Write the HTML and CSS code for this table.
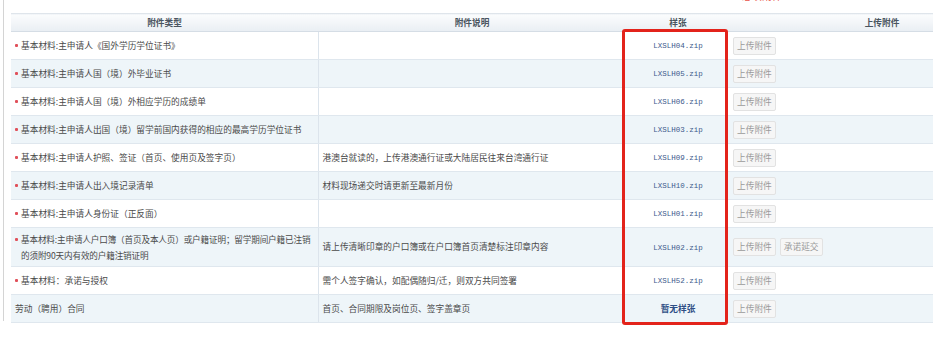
FILE: index.html
```html
<!DOCTYPE html>
<html lang="zh">
<head>
<meta charset="utf-8">
<link rel="stylesheet" href="styles.css">
</head>
<body>
<div class="page">
  <div class="topnote"><span class="req">* 必填附件</span></div>
  <table class="att">
    <colgroup>
      <col class="c1"><col class="c2"><col class="c3"><col class="c4">
    </colgroup>
    <thead>
      <tr><th>附件类型</th><th>附件说明</th><th>样张</th><th>上传附件</th></tr>
    </thead>
    <tbody>
      <tr><td class="type mark"><span class="dot"></span>基本材料:主申请人《国外学历学位证书》</td><td class="desc"></td><td class="sample"><a>LXSLH04.zip</a></td><td class="ops"><span class="btn">上传附件</span></td></tr>
      <tr class="alt"><td class="type mark"><span class="dot"></span>基本材料:主申请人国（境）外毕业证书</td><td class="desc"></td><td class="sample"><a>LXSLH05.zip</a></td><td class="ops"><span class="btn">上传附件</span></td></tr>
      <tr><td class="type mark"><span class="dot"></span>基本材料:主申请人国（境）外相应学历的成绩单</td><td class="desc"></td><td class="sample"><a>LXSLH06.zip</a></td><td class="ops"><span class="btn">上传附件</span></td></tr>
      <tr class="alt"><td class="type mark"><span class="dot"></span>基本材料:主申请人出国（境）留学前国内获得的相应的最高学历学位证书</td><td class="desc"></td><td class="sample"><a>LXSLH03.zip</a></td><td class="ops"><span class="btn">上传附件</span></td></tr>
      <tr><td class="type mark"><span class="dot"></span>基本材料:主申请人护照、签证（首页、使用页及签字页）</td><td class="desc">港澳台就读的，上传港澳通行证或大陆居民往来台湾通行证</td><td class="sample"><a>LXSLH09.zip</a></td><td class="ops"><span class="btn">上传附件</span></td></tr>
      <tr class="alt"><td class="type mark"><span class="dot"></span>基本材料:主申请人出入境记录清单</td><td class="desc">材料现场递交时请更新至最新月份</td><td class="sample"><a>LXSLH10.zip</a></td><td class="ops"><span class="btn">上传附件</span></td></tr>
      <tr><td class="type mark"><span class="dot"></span>基本材料:主申请人身份证（正反面）</td><td class="desc"></td><td class="sample"><a>LXSLH01.zip</a></td><td class="ops"><span class="btn">上传附件</span></td></tr>
      <tr class="alt tall"><td class="type mark"><span class="dot"></span>基本材料:主申请人户口簿（首页及本人页）或户籍证明；留学期间户籍已注销的须附90天内有效的户籍注销证明</td><td class="desc">请上传清晰印章的户口簿或在户口簿首页清楚标注印章内容</td><td class="sample"><a>LXSLH02.zip</a></td><td class="ops"><span class="btn">上传附件</span><span class="btn">承诺延交</span></td></tr>
      <tr><td class="type mark"><span class="dot"></span>基本材料：承诺与授权</td><td class="desc">需个人签字确认，如配偶随归/迁，则双方共同签署</td><td class="sample"><a>LXSLH52.zip</a></td><td class="ops"><span class="btn">上传附件</span></td></tr>
      <tr class="alt"><td class="type">劳动（聘用）合同</td><td class="desc">首页、合同期限及岗位页、签字盖章页</td><td class="sample"><a class="none">暂无样张</a></td><td class="ops"><span class="btn">上传附件</span></td></tr>
    </tbody>
  </table>
  <div class="highlight"></div>
</div>
</body>
</html>
```

FILE: styles.css
```css
html, body {
  margin: 0;
  padding: 0;
  background: #fff;
  overflow: hidden;
}
body {
  width: 933px;
  height: 341px;
  font-family: "Noto Sans CJK SC", "Noto Sans", sans-serif;
  font-size: 8.7px;
  color: #444;
}
.page {
  position: relative;
  margin-left: 3px;
  border-left: 1px solid #d4d4d4;
  padding-left: 7px;
  width: 1040px;
  height: 321px;
}
.topnote {
  height: 13px;
  overflow: hidden;
  padding-left: 724px;
}
.req {
  display: block;
  margin-top: -10px;
  color: #e8544a;
  font-size: 10px;
  line-height: 12px;
}
.att {
  border-collapse: collapse;
  table-layout: fixed;
  width: 1023px;
}
.c1 { width: 307px; }
.c2 { width: 308px; }
.c3 { width: 104px; }
.c4 { width: 304px; }
.att th {
  height: 17px;
  padding: 0;
  font-weight: bold;
  color: #4a5560;
  font-size: 8.7px;
  text-align: center;
  background: linear-gradient(#fbfcfd, #e9eef3);
  border-top: 1px solid #dfe5eb;
  border-bottom: 1px solid #d5dde5;
}
.att td {
  height: 27px;
  padding: 0 0 0 4px;
  border-bottom: 1px solid #dfe7ee;
  vertical-align: middle;
  line-height: 16px;
  color: #4a4a4a;
}
.att tr.alt td { background: #eef5f9; }
.att tr.tall td { height: 38px; }
.att tr.tall td.type { font-size: 8.6px; letter-spacing: -0.15px; }
.att td.type { border-right: 1px solid #dce4ec; padding-right: 0; }
.att td.type.mark { padding-left: 10px; text-indent: -6px; }
.dot {
  display: inline-block;
  width: 3px;
  height: 3px;
  margin-right: 3px;
  border-radius: 1px;
  background: #e0505a;
  vertical-align: 2px;
}
.att td.sample { text-align: center; padding: 0; }
.sample a {
  font-family: "Liberation Mono", monospace;
  font-size: 7.5px;
  color: #3d5a8c;
}
.sample a.none {
  font-family: "Noto Sans CJK SC", sans-serif;
  font-size: 8.7px;
  font-weight: bold;
  color: #2f4f86;
}
.att td.ops { padding-left: 3px; }
.btn {
  display: inline-block;
  height: 16px;
  line-height: 16px;
  padding: 0 3px;
  margin-right: 4px;
  border: 1px solid #e2e2e2;
  border-radius: 2px;
  background: #f6f6f6;
  color: #9a9a9a;
  font-size: 8.7px;
  vertical-align: middle;
}
.highlight {
  position: absolute;
  left: 618px;
  top: 29px;
  width: 100px;
  height: 290px;
  border: 3px solid #e3231b;
  border-radius: 3px;
}
```
